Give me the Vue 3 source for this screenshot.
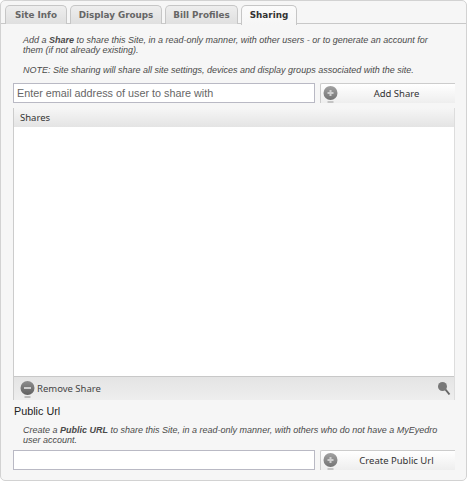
<script setup>
const tabs = [
  { label: 'Site Info', width: 62 },
  { label: 'Display Groups', width: 92 },
  { label: 'Bill Profiles', width: 73 },
  { label: 'Sharing', width: 56, active: true }
]
</script>

<template>
  <main class="panel">
    <nav class="tabs">
      <div
        v-for="tab in tabs"
        :key="tab.label"
        class="tab"
        :class="{ active: tab.active }"
        :style="{ width: tab.width + 'px' }"
      >
        {{ tab.label }}
      </div>
    </nav>

    <section class="body">
      <p class="hint first">
        Add a <b>Share</b> to share this Site, in a read-only manner, with other users - or to generate an account for
        them (if not already existing).
      </p>
      <p class="hint note">NOTE: Site sharing will share all site settings, devices and display groups associated with the site.</p>

      <div class="form-row">
        <input class="text-input" type="text" placeholder="Enter email address of user to share with" />
        <button class="action">
          <svg class="round-icon" width="15" height="19" viewBox="0 0 15 19">
            <defs>
              <linearGradient id="add-fill" x1="0" y1="0" x2="0" y2="1">
                <stop offset="0" stop-color="#a2a2a2" />
                <stop offset="1" stop-color="#747474" />
              </linearGradient>
            </defs>
            <circle cx="7.5" cy="9" r="7" fill="url(#add-fill)" />
            <path d="M4.5 9h6M7.5 6v6" stroke="#cfcfcf" stroke-width="2" />
            <path d="M4.5 18h6" stroke="#999" stroke-width="1" />
          </svg>
          <span class="action-label">Add Share</span>
        </button>
      </div>

      <div class="grid">
        <div class="grid-head">Shares</div>
        <div class="grid-rows"></div>
        <div class="grid-foot">
          <span class="remove">
            <svg width="15" height="19" viewBox="0 0 15 19">
              <defs>
                <linearGradient id="remove-fill" x1="0" y1="0" x2="0" y2="1">
                  <stop offset="0" stop-color="#8e8e8e" />
                  <stop offset="1" stop-color="#606060" />
                </linearGradient>
              </defs>
              <circle cx="7.5" cy="9" r="7" fill="url(#remove-fill)" />
              <path d="M4 9h7" stroke="#cfcfcf" stroke-width="2" />
              <path d="M4.5 18h6" stroke="#8a8a8a" stroke-width="1" />
            </svg>
            Remove Share
          </span>
          <svg width="14" height="15" viewBox="0 0 14 15"><circle cx="5.5" cy="5.5" r="4.5" fill="#787878" /><path d="M8.5 8.5l4 5" stroke="#666" stroke-width="2" /></svg>
        </div>
      </div>

      <h2 class="public-title">Public Url</h2>
      <p class="hint public">
        Create a <b>Public URL</b> to share this Site, in a read-only manner, with others who do not have a MyEyedro
        user account.
      </p>
      <div class="form-row last">
        <input class="text-input" type="text" />
        <button class="action">
          <svg class="round-icon" width="15" height="19" viewBox="0 0 15 19">
            <defs>
              <linearGradient id="create-fill" x1="0" y1="0" x2="0" y2="1">
                <stop offset="0" stop-color="#a2a2a2" />
                <stop offset="1" stop-color="#747474" />
              </linearGradient>
            </defs>
            <circle cx="7.5" cy="9" r="7" fill="url(#create-fill)" />
            <path d="M4.5 9h6M7.5 6v6" stroke="#cfcfcf" stroke-width="2" />
            <path d="M4.5 18h6" stroke="#999" stroke-width="1" />
          </svg>
          <span class="action-label">Create Public Url</span>
        </button>
      </div>
    </section>
  </main>
</template>

<style>
body {
  background: #fff;
}
</style>

<style scoped>
.panel {
  background: #f6f6f6;
  border: 1px solid #d2d2d2;
  border-radius: 5px;
  box-sizing: border-box;
  font-family: 'Liberation Sans', Arial, sans-serif;
  height: 481px;
  width: 467px;
}

.tabs {
  border-bottom: 1px solid #c8c8c8;
  display: flex;
  gap: 3px;
  height: 22px;
  padding: 0 4px;
}

.tab {
  background: linear-gradient(#eeeeee, #dfdfdf);
  border: 1px solid #c6c6c6;
  border-bottom: 0;
  border-radius: 5px 5px 0 0;
  box-sizing: border-box;
  color: #666;
  font-family: 'DejaVu Sans', sans-serif;
  font-size: 8.8px;
  font-weight: bold;
  height: 19px;
  line-height: 18px;
  margin-top: 4px;
  text-align: center;
}

.tab.active {
  background: linear-gradient(#fbfbfb, #f6f6f6);
  color: #333;
  height: 20px;
  margin-bottom: -1px;
}

.body {
  padding: 11px 0 0 12px;
}

.hint {
  color: #4a4a4a;
  font-size: 9px;
  font-style: italic;
  line-height: 10px;
  margin: 0;
  padding: 0 20px 0 10px;
}

.hint b {
  font-weight: bold;
}

.note {
  margin-top: 10px;
}

.form-row {
  display: flex;
  gap: 5px;
  height: 20px;
  margin-top: 8px;
}

.text-input {
  background: #fff;
  border: 1px solid #b9b9c4;
  box-sizing: border-box;
  color: #666;
  font-family: 'Liberation Sans', Arial, sans-serif;
  font-size: 10.8px;
  height: 20px;
  padding: 0 3px;
  width: 302px;
}

.text-input::placeholder {
  color: #666;
  opacity: 1;
}

.action {
  align-items: center;
  background: linear-gradient(#ffffff, #eeeeee);
  border: 0;
  border-left: 1px solid #ccc;
  border-top: 1px solid #ccc;
  border-radius: 2px 0 0 0;
  color: #333;
  display: flex;
  font-family: 'Noto Sans', sans-serif;
  font-size: 9.5px;
  height: 20px;
  padding: 0 0 0 2px;
  width: 135px;
}

.round-icon {
  flex: none;
}

.action-label {
  flex: 1;
  text-align: center;
}

.grid {
  background: #fff;
  border-left: 1px solid #ccc;
  border-right: 1px solid #ddd;
  box-sizing: border-box;
  display: flex;
  flex-direction: column;
  height: 292px;
  margin-top: 5px;
  width: 442px;
}

.grid-head {
  background: linear-gradient(#f6f6f6, #e4e4e4);
  color: #333;
  font-family: 'Noto Sans', sans-serif;
  font-size: 9.5px;
  height: 19px;
  line-height: 19px;
  padding-left: 6px;
}

.grid-rows {
  flex: 1;
}

.grid-foot {
  align-items: center;
  background: linear-gradient(#e4e4e4, #eeeeee);
  border-top: 1px solid #c8c8c8;
  display: flex;
  height: 23px;
  justify-content: space-between;
  padding: 0 3px 0 6px;
}

.remove {
  align-items: center;
  color: #444;
  display: flex;
  font-family: 'Noto Sans', sans-serif;
  font-size: 9.5px;
  gap: 2px;
}

.public-title {
  color: #222;
  font-size: 10.8px;
  font-weight: normal;
  line-height: 13px;
  margin: 5px 0 0 1px;
}

.public {
  margin-top: 7px;
}

.last {
  margin-top: 5px;
}
</style>
